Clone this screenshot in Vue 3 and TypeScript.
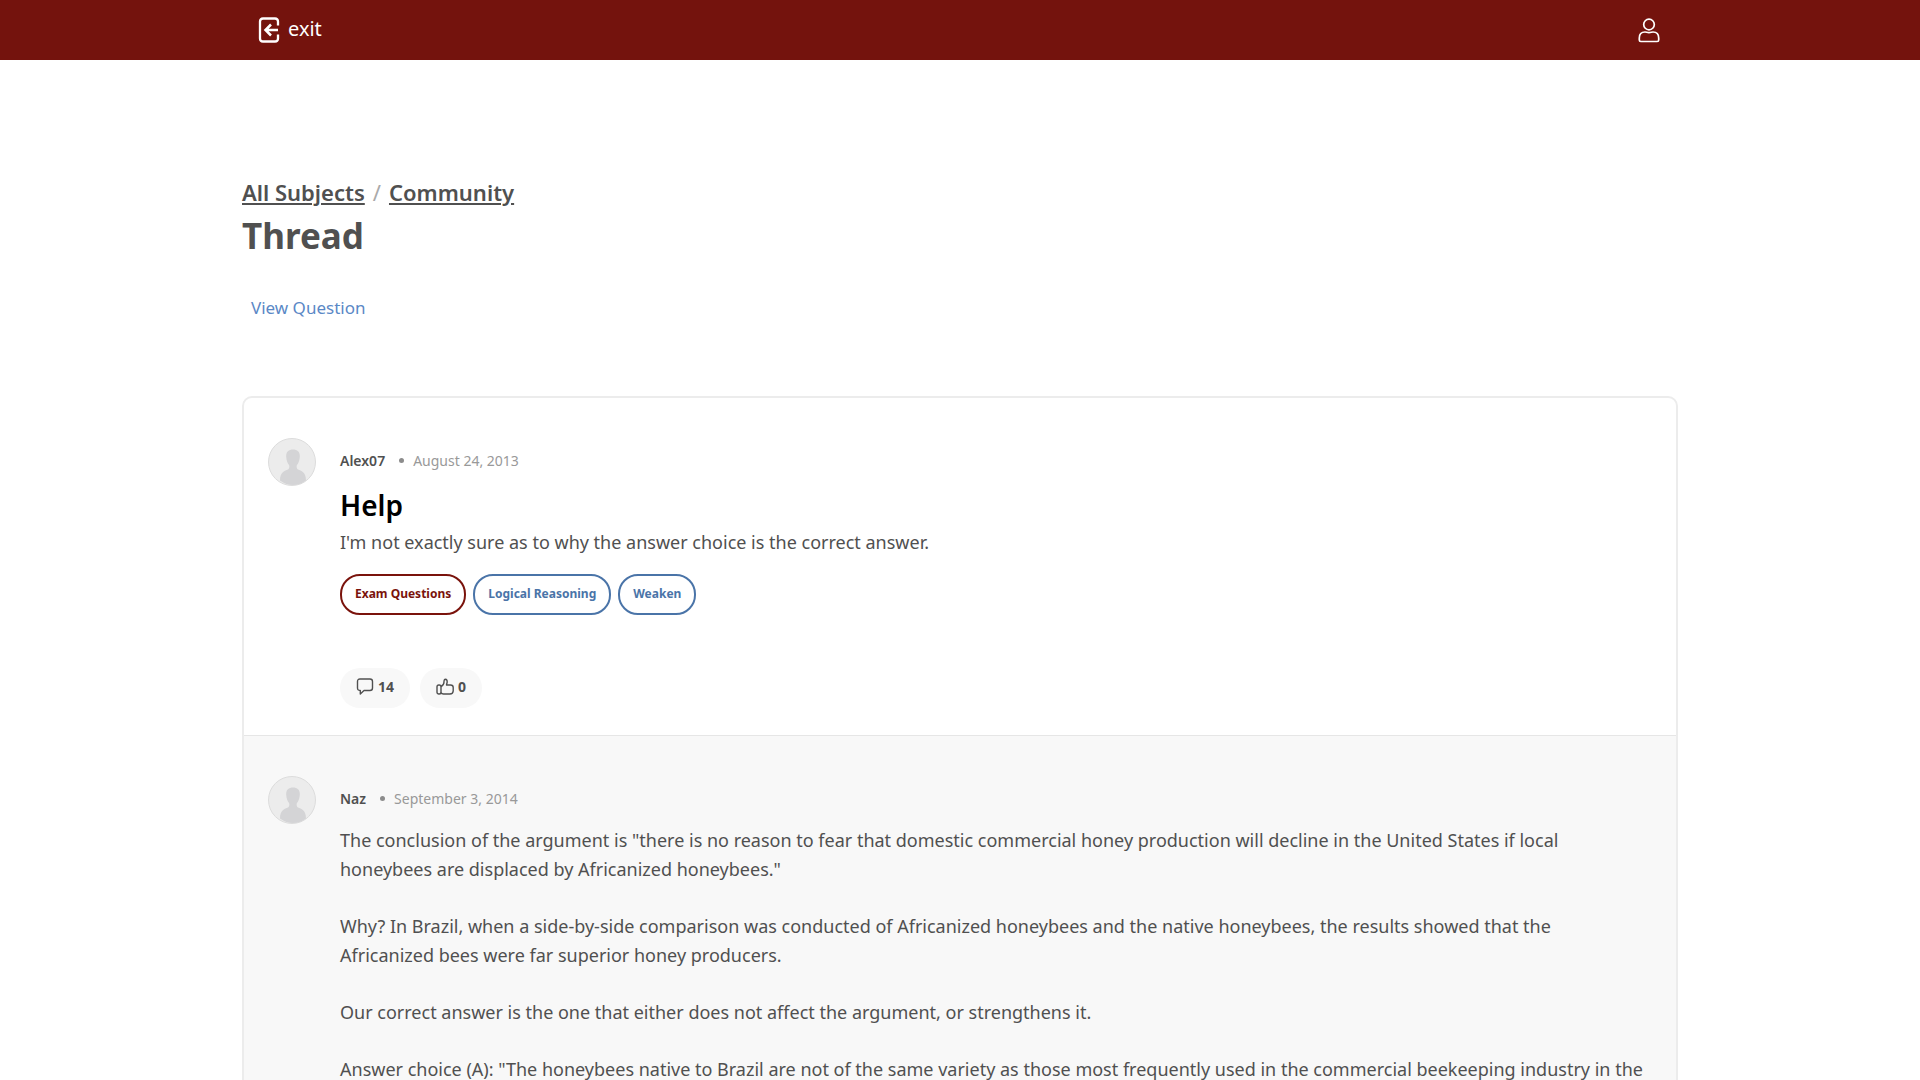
<script setup lang="ts">
interface Tag {
  label: string
  tone: 'red' | 'blue'
}

interface Post {
  id: number
  author: string
  date: string
  title?: string
  paragraphs: string[]
  tags?: Tag[]
  comments?: number
  likes?: number
}

const posts: Post[] = [
  {
    id: 1,
    author: 'Alex07',
    date: 'August 24, 2013',
    title: 'Help',
    paragraphs: ["I'm not exactly sure as to why the answer choice is the correct answer."],
    tags: [
      { label: 'Exam Questions', tone: 'red' },
      { label: 'Logical Reasoning', tone: 'blue' },
      { label: 'Weaken', tone: 'blue' },
    ],
    comments: 14,
    likes: 0,
  },
  {
    id: 2,
    author: 'Naz',
    date: 'September 3, 2014',
    paragraphs: [
      'The conclusion of the argument is "there is no reason to fear that domestic commercial honey production will decline in the United States if local\nhoneybees are displaced by Africanized honeybees."',
      'Why? In Brazil, when a side-by-side comparison was conducted of Africanized honeybees and the native honeybees, the results showed that the\nAfricanized bees were far superior honey producers.',
      'Our correct answer is the one that either does not affect the argument, or strengthens it.',
      'Answer choice (A): "The honeybees native to Brazil are not of the same variety as those most frequently used in the commercial beekeeping industry in the',
    ],
  },
]
</script>

<template>
  <div class="page">
    <header class="topbar">
      <div class="topbar-inner">
        <a class="exit" href="#">
          <svg width="22" height="26" viewBox="0 0 22 26" fill="none" stroke="currentColor" stroke-width="2.3" aria-hidden="true">
            <path d="M20 8.500V4.500Q20 1.500 17 1.500H5Q2 1.500 2 4.500V21.500Q2 24.500 5 24.500H17Q20 24.500 20 21.500V17.500" />
            <path d="M20 13H7.500M13 7.500L7.500 13L13 18.500" stroke-width="2.500" />
          </svg>
          <span>exit</span>
        </a>
        <button class="account" type="button" aria-label="Account">
          <svg width="22" height="26" viewBox="0 0 22 26" fill="none" stroke="currentColor" stroke-width="1.700" aria-hidden="true">
            <circle cx="11" cy="7.500" r="5.300" />
            <path d="M1.300 21C1.300 16.800 4 15 7 15C8.500 15 9 15.700 11 15.700S13.500 15 15 15C18 15 20.700 16.800 20.700 21V23Q20.700 24.500 19.200 24.500H2.800Q1.300 24.500 1.300 23Z" />
          </svg>
        </button>
      </div>
    </header>

    <main class="content">
      <nav class="crumbs" aria-label="Breadcrumb">
        <a href="#">All Subjects</a>
        <span class="slash">/</span>
        <a href="#">Community</a>
      </nav>
      <h1>Thread</h1>
      <a class="view-question" href="#">View Question</a>

      <section class="thread">
        <article v-for="post in posts" :key="post.id" class="post" :class="{ reply: !post.title }">
          <svg class="avatar" width="48" height="48" viewBox="0 0 48 48" aria-hidden="true">
            <circle cx="24" cy="24" r="23.500" fill="#ececec" stroke="#dcdcdc" />
            <path
              d="M25 11.500C29.500 11.500 32 14 31.800 18.500C31.600 22.500 30.500 25 29 27C28.300 28 28.500 30.500 30 31.500C33 33 38 33.500 38 42.500C30 48.500 20 48.500 12 42.500C12 33.500 17 33 20 31.500C21.500 30.500 21.700 28 21 27C19.500 25 18.400 22.500 18.200 18.500C18 14 20.500 11.500 25 11.500Z"
              fill="#d4d4d6"
            />
          </svg>
          <div class="post-main">
            <div class="meta">
              <strong>{{ post.author }}</strong>
              <span class="dot"></span>
              <time>{{ post.date }}</time>
            </div>
            <h2 v-if="post.title">{{ post.title }}</h2>
            <div class="text">
              <p v-for="(paragraph, index) in post.paragraphs" :key="index">{{ paragraph }}</p>
            </div>
            <div v-if="post.tags" class="tags">
              <a v-for="tag in post.tags" :key="tag.label" class="tag" :class="tag.tone" href="#">{{ tag.label }}</a>
            </div>
            <div v-if="post.comments !== undefined" class="actions">
              <button type="button" aria-label="Comments">
                <svg width="18" height="18" viewBox="0 0 18 18" fill="none" stroke="currentColor" stroke-width="1.400" stroke-linejoin="round" aria-hidden="true">
                  <path d="M4 1H14Q16.500 1 16.500 3.500V10Q16.500 12.500 14 12.500H8L4.300 16V12.500H4Q1.500 12.500 1.500 10V3.500Q1.500 1 4 1Z" />
                </svg>
                <span>{{ post.comments }}</span>
              </button>
              <button type="button" aria-label="Likes">
                <svg width="18" height="18" viewBox="0 0 18 18" fill="none" stroke="currentColor" stroke-width="1.400" stroke-linejoin="round" aria-hidden="true">
                  <rect x="1" y="7" width="4" height="9" rx="1.800" />
                  <path d="M5 8.500C7 7.500 8 6 8 4V3Q8.200 1.300 9.500 1.300Q11.200 1.500 11.200 4L10.500 7H14.500Q17.200 7 17.200 9.500V13Q17 16 14 16H7.500Q5.500 16 5 14.500" />
                </svg>
                <span>{{ post.likes }}</span>
              </button>
            </div>
          </div>
        </article>
      </section>
    </main>
  </div>
</template>

<style>
body {
  margin: 0;
  background: #fff;
}
</style>

<style scoped>
.page {
  height: 100vh;
  overflow: hidden;
  font-family: "Noto Sans", "Open Sans", sans-serif;
  color: #505050;
}

.topbar {
  background: #74130d;
}

.topbar-inner,
.content {
  box-sizing: border-box;
  width: 100%;
  max-width: 1436px;
  margin: 0 auto;
}

.topbar-inner {
  display: flex;
  align-items: center;
  justify-content: space-between;
  height: 60px;
  padding: 0 18px 0 16px;
}

.exit {
  display: flex;
  align-items: center;
  gap: 8px;
  color: #fff;
  font-size: 20px;
  line-height: 28px;
  text-decoration: none;
}

.exit span {
  padding-bottom: 2px;
}

.account {
  display: flex;
  padding: 0;
  border: 0;
  background: none;
  color: #fff;
}

.content {
  padding-top: 116px;
}

.crumbs {
  display: flex;
  gap: 8px;
  font-size: 22px;
  line-height: 32px;
}

.crumbs a {
  color: #505050;
  font-weight: 600;
  text-decoration-thickness: 2px;
  text-underline-offset: 2px;
}

.slash {
  color: #aaa;
}

h1 {
  margin: 4px 0 0;
  font-size: 35px;
  line-height: 48px;
  font-weight: 700;
}

.view-question {
  display: block;
  width: fit-content;
  margin-top: 33px;
  padding: 0 9px;
  color: #5a88c6;
  font-size: 17px;
  line-height: 29px;
  text-decoration: none;
}

.thread {
  margin-top: 74px;
  border: 2px solid #ececec;
  border-radius: 10px;
}

.post {
  display: flex;
  align-items: flex-start;
  gap: 24px;
  padding: 40px 12px 27px 24px;
}

.post.reply {
  border-top: 1px solid #e6e6e6;
  background: #f8f8f8;
}

.reply .text {
  padding-top: 2px;
}

.avatar {
  flex: none;
}

.post-main {
  flex: 1;
  min-width: 0;
}

.meta {
  display: flex;
  align-items: center;
  gap: 9px;
  box-sizing: border-box;
  height: 48px;
  padding-bottom: 3px;
  font-size: 14px;
}

.meta strong {
  margin-right: 5px;
  font-weight: 600;
}

.dot {
  width: 5px;
  height: 5px;
  border-radius: 50%;
  background: #8c8c8c;
}

.meta time {
  color: #999;
}

h2 {
  margin: 0 0 4px;
  color: #000;
  font-size: 28px;
  line-height: 38px;
  font-weight: 600;
}

.text {
  font-size: 18px;
  line-height: 29px;
  white-space: pre-line;
}

.text p {
  margin: 0 0 28px;
}

.text p:last-child {
  margin-bottom: 0;
}

.tags {
  display: flex;
  gap: 7px;
  margin-top: 17px;
}

.tag {
  padding: 9px 13px 11px;
  border: 2px solid;
  border-radius: 20px;
  font-size: 12px;
  line-height: 17px;
  font-weight: 700;
  text-decoration: none;
}

.red {
  color: #7a130c;
}

.blue {
  color: #4a74a8;
}

.actions {
  display: flex;
  gap: 10px;
  margin-top: 53px;
}

.actions button {
  display: flex;
  align-items: center;
  gap: 4px;
  height: 40px;
  padding: 0 16px 3px;
  border: 0;
  border-radius: 20px;
  background: #f8f8f8;
  color: #505050;
  font: 700 14px "Noto Sans", sans-serif;
}
</style>
